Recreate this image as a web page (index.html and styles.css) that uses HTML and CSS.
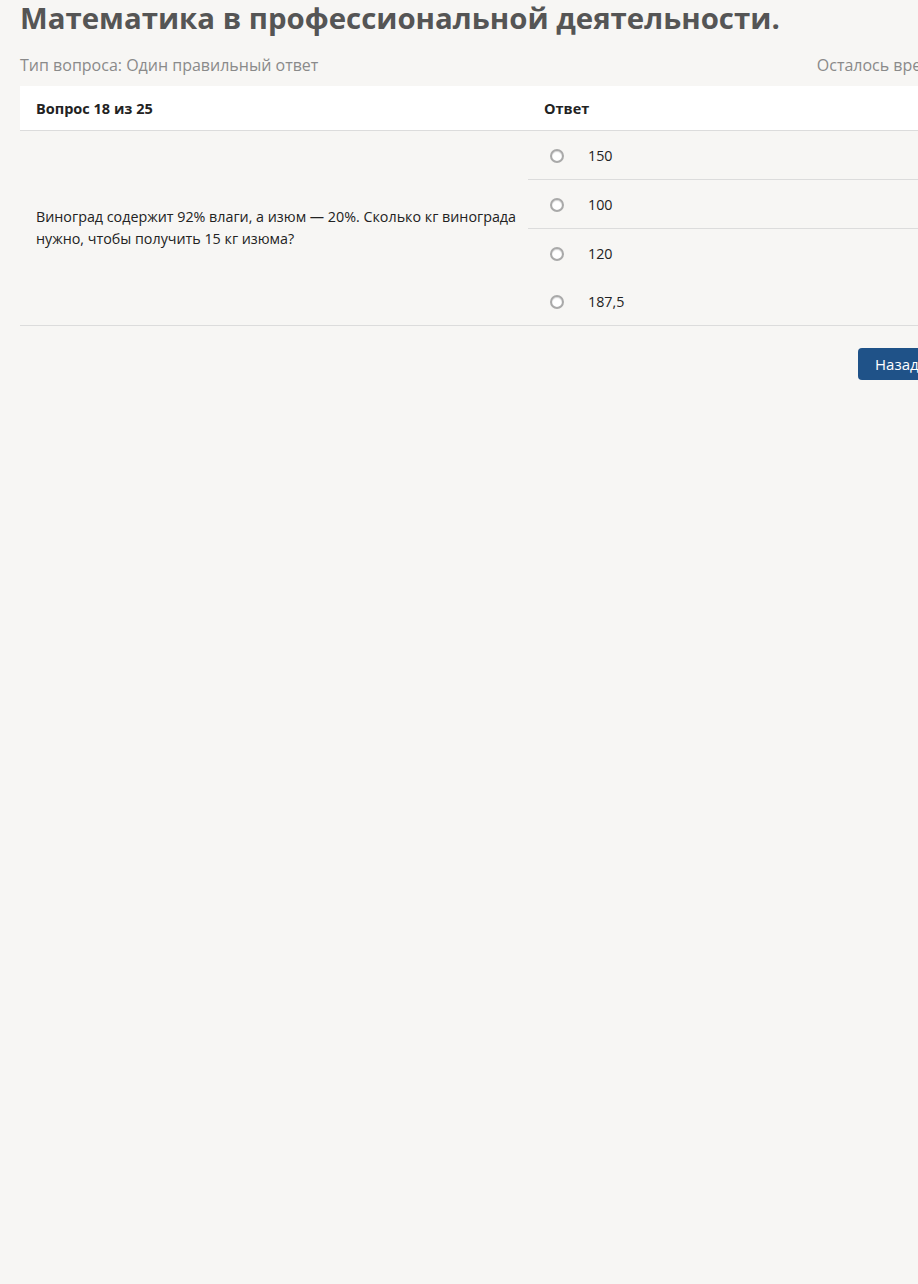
FILE: index.html
```html
<!DOCTYPE html>
<html lang="ru">

<head>
  <meta charset="UTF-8">
  <meta name="viewport" content="width=device-width, initial-scale=1.0">
  <title>Тестирование</title>
  <link rel="stylesheet" href="styles.css">
</head>

<body>
  <div class="page">
    <h1 class="test-title">Математика в профессиональной деятельности.</h1>

    <div class="test-meta">
      <span>Тип вопроса: Один правильный ответ</span>
      <span class="timer">Осталось времени: 00:41:27</span>
    </div>

    <table class="question-table">
      <thead>
        <tr>
          <th class="col-question">Вопрос 18 из 25</th>
          <th class="col-answer">Ответ</th>
        </tr>
      </thead>
      <tbody>
        <tr class="sep">
          <td class="question-text" rowspan="4">
            Виноград содержит 92% влаги, а изюм — 20%. Сколько кг винограда нужно, чтобы получить 15 кг изюма?
          </td>
          <td class="answer">
            <label><input type="radio" name="q18" value="1"><span>150</span></label>
          </td>
        </tr>
        <tr class="sep">
          <td class="answer">
            <label><input type="radio" name="q18" value="2"><span>100</span></label>
          </td>
        </tr>
        <tr>
          <td class="answer">
            <label><input type="radio" name="q18" value="3"><span>120</span></label>
          </td>
        </tr>
        <tr class="last">
          <td class="answer">
            <label><input type="radio" name="q18" value="4"><span>187,5</span></label>
          </td>
        </tr>
      </tbody>
    </table>

    <div class="nav-buttons">
      <button class="btn">Назад</button>
      <button class="btn">Далее</button>
    </div>
  </div>
</body>

</html>
```

FILE: styles.css
```css
html,
body {
  overflow-x: hidden;
}

body {
  margin: 0;
  background: #f7f6f4;
  font-family: "Open Sans", "Noto Sans", sans-serif;
  color: #222;
}

.page {
  width: 1014px;
  padding: 0 20px;
}

.test-title {
  margin: 0;
  font-size: 29.4px;
  line-height: 36px;
  font-weight: 700;
  color: #555;
}

.test-meta {
  display: flex;
  justify-content: space-between;
  margin-top: 17px;
  font-size: 16px;
  line-height: 24px;
  color: #8a8a8a;
}

.question-table {
  width: 100%;
  margin-top: 9px;
  border-collapse: collapse;
  font-size: 14.3px;
}

.question-table th {
  height: 44px;
  padding: 0 16px;
  background: #fff;
  text-align: left;
  font-weight: 700;
  font-size: 14.5px;
  border-bottom: 1px solid #dcdcdc;
}

.col-question {
  width: 476px;
}

.question-text {
  padding: 0 10px 0 16px;
  vertical-align: middle;
  line-height: 22px;
  border-bottom: 1px solid #dcdcdc;
}

.answer {
  height: 48px;
  padding: 0 22px;
}

.sep .answer,
.last .answer {
  border-bottom: 1px solid #dcdcdc;
}

.answer label {
  display: flex;
  align-items: center;
  gap: 24px;
}

.answer input {
  appearance: none;
  width: 14px;
  height: 14px;
  margin: 2px 0 0 0;
  border-radius: 50%;
  border: 2px solid #a9a9a9;
  background: radial-gradient(circle, #fff 55%, #ececec 100%);
  box-shadow: inset 0 1px 1px rgba(0, 0, 0, 0.15);
}

.nav-buttons {
  display: flex;
  gap: 10px;
  margin-top: 22px;
  padding-left: 838px;
}

.btn {
  height: 32px;
  padding: 0 17px;
  border: none;
  border-radius: 4px;
  background: #1f5288;
  color: #fff;
  font-family: "Open Sans", "Noto Sans", sans-serif;
  font-size: 15px;
}
```
